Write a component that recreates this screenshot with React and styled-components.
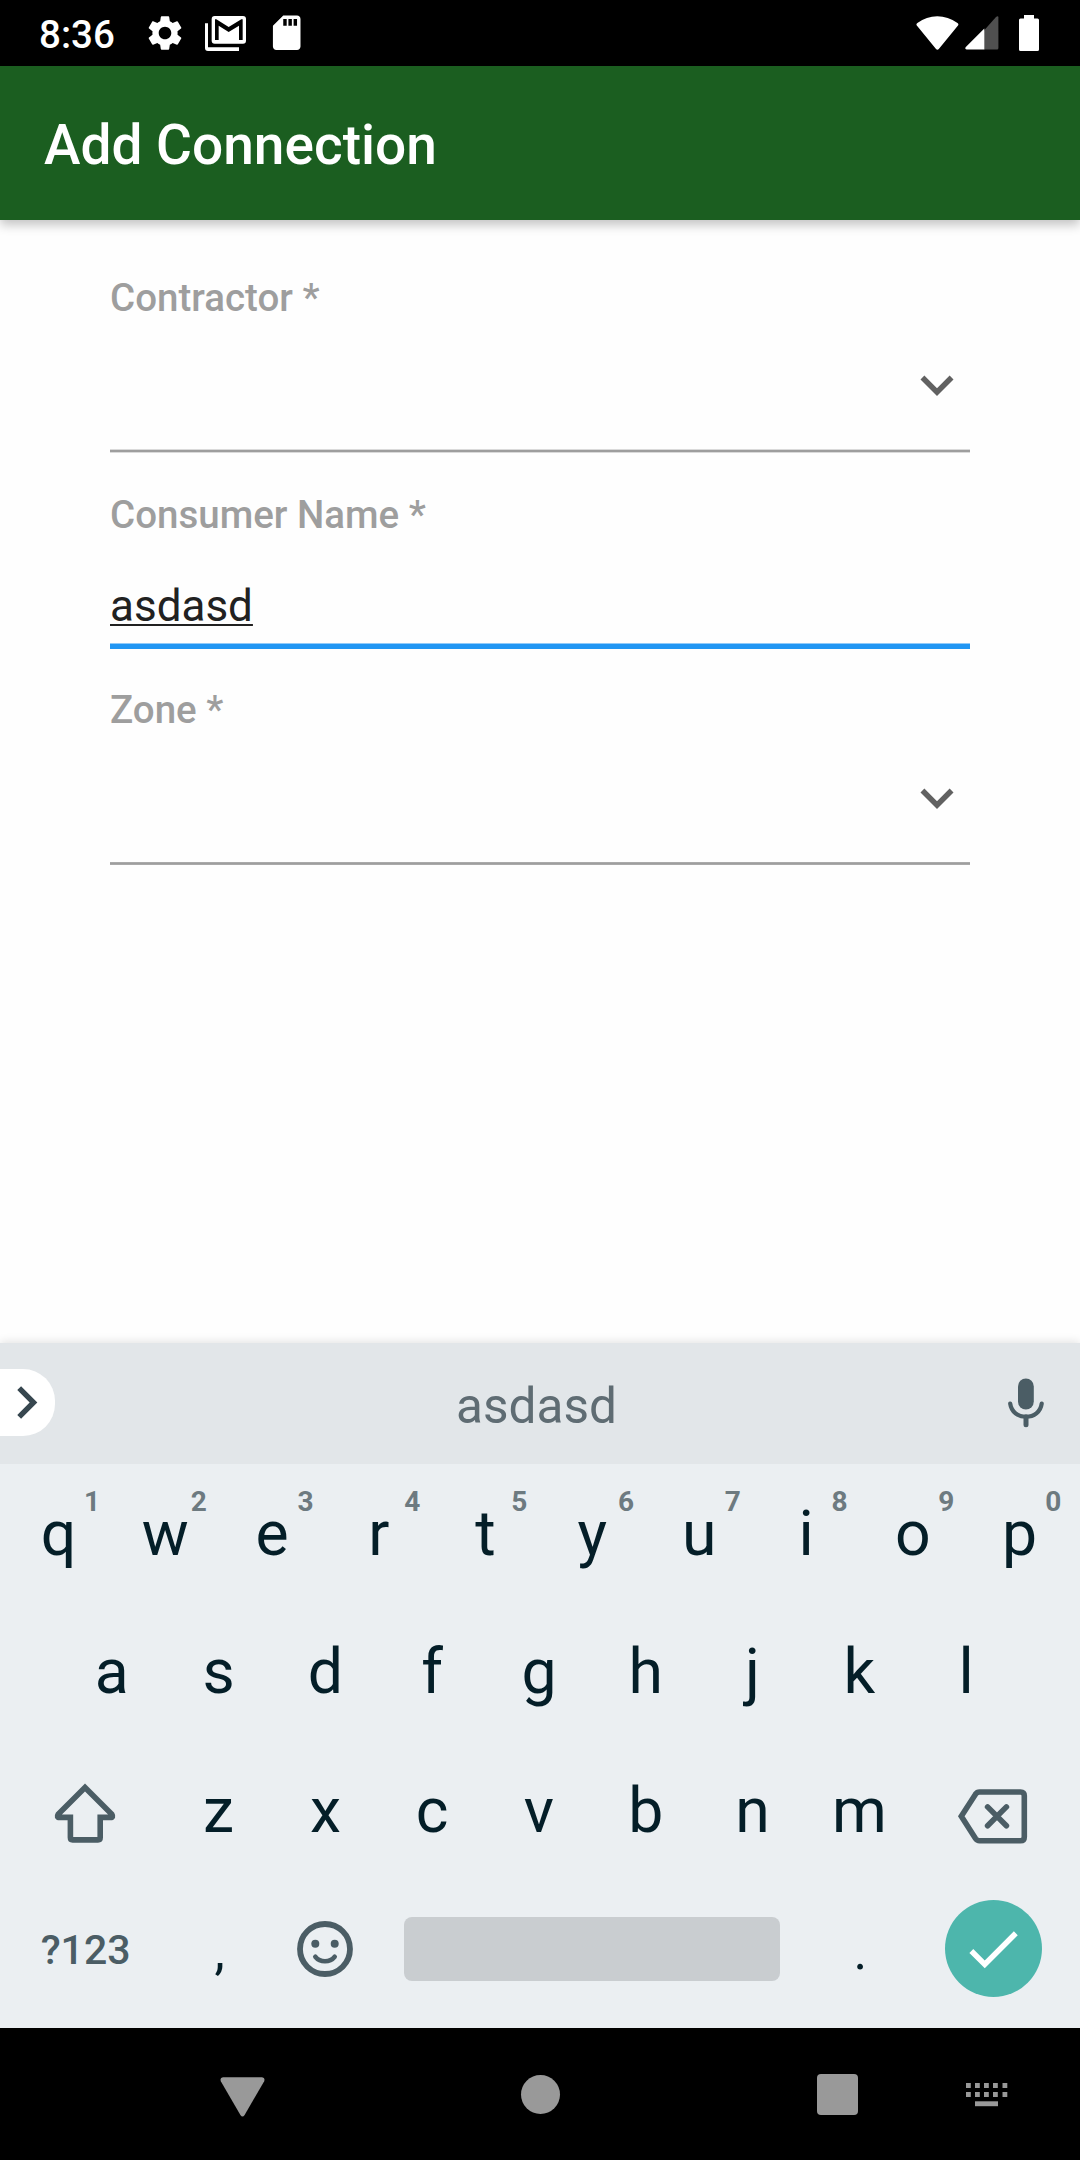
import React from "react";
import styled, { createGlobalStyle } from "styled-components";
import { MdSettings, MdSdStorage, MdKeyboardArrowDown, MdKeyboardArrowRight, MdCheck } from "react-icons/md";

const GlobalStyle = createGlobalStyle`
  * { box-sizing: border-box; }
  body { margin: 0; background: #fefefe; }
`;

const Screen = styled.div`
  width: 1080px;
  height: 2160px;
  display: flex;
  flex-direction: column;
  overflow: hidden;
  background: #fefefe;
  font-family: Roboto, "Noto Sans", sans-serif;
  svg { display: block; flex: none; }
`;

const StatusBar = styled.header`
  flex: none;
  height: 66px;
  display: flex;
  align-items: center;
  justify-content: space-between;
  padding: 0 41px 0 39px;
  background: #000;
  color: #fff;
`;

const StatusGroup = styled.div`
  display: flex;
  align-items: center;
`;

const Clock = styled.span`
  width: 95px;
  padding-top: 3px;
  font-size: 38.5px;
  line-height: 46px;
  font-weight: 500;
`;

const Notification = styled.span`
  width: 61px;
  display: flex;
  justify-content: center;
`;

const SignalGroup = styled(StatusGroup)`
  gap: ${(p) => p.$gap}px;
`;

const AppBar = styled.div`
  flex: none;
  height: 154px;
  display: flex;
  align-items: center;
  padding: 4px 44px 0;
  background: #1b5e20;
  box-shadow: 0 5px 10px rgba(0, 0, 0, 0.23);
  z-index: 1;
`;

const Title = styled.h1`
  margin: 0;
  color: #fff;
  font-size: 55px;
  line-height: 64px;
  font-weight: 500;
`;

const Form = styled.form`
  flex: 1;
  display: flex;
  flex-direction: column;
  padding: 54px 110px 0;
`;

const Field = styled.div`
  display: flex;
  flex-direction: column;
  margin-bottom: ${(p) => p.$gap || 0}px;
`;

const Label = styled.label`
  height: 46px;
  color: #9e9e9e;
  font-size: 38.5px;
  line-height: 48px;
  font-weight: 500;
`;

const SelectArea = styled.div`
  height: ${(p) => p.$height}px;
  padding-top: 1px;
  display: flex;
  align-items: center;
  justify-content: flex-end;
  color: #616161;
`;

const InputArea = styled.div`
  height: 106px;
  padding-top: 32px;
  color: #212121;
  font-size: 44px;
  line-height: 74px;
  span {
    text-decoration: underline;
    text-decoration-thickness: 2px;
    text-underline-offset: 3px;
    text-decoration-skip-ink: none;
  }
`;

const Rule = styled.div`
  height: ${(p) => p.$height}px;
  background: ${(p) => p.$edge};
  padding: ${(p) => p.$inset};
  &::before {
    content: "";
    display: block;
    height: 100%;
    background: ${(p) => p.$color};
  }
`;

const Keyboard = styled.section`
  flex: none;
  height: 685px;
  display: flex;
  flex-direction: column;
  background: #ebeff2;
  box-shadow: 0 -1px 9px rgba(0, 0, 0, 0.12);
`;

const Strip = styled.div`
  height: 121px;
  display: grid;
  grid-template-columns: 55px 1fr 56px;
  align-items: center;
  padding-right: 26px;
  background: #e2e6e9;
`;

const Expand = styled.button`
  width: 55px;
  height: 67px;
  margin: 0 0 2px;
  padding: 0;
  display: flex;
  align-items: center;
  border: 0;
  border-radius: 0 32px 32px 0;
  background: #fff;
  color: #37474f;
  overflow: hidden;
  svg { margin-left: -6px; }
`;

const Suggestion = styled.span`
  padding: 4px 0 0 20px;
  text-align: center;
  color: #5f6c73;
  font-size: 49.5px;
  line-height: 60px;
`;

const MicSlot = styled.span`
  display: flex;
  justify-content: center;
  padding-bottom: 2px;
`;

const Keys = styled.div`
  display: flex;
  flex-direction: column;
`;

const KeyRow = styled.div`
  height: 138.5px;
  display: flex;
  padding: 0 0 0 ${(p) => p.$inset || 5}px;
`;

const Key = styled.div`
  position: relative;
  flex: none;
  width: ${(p) => 106.8 * (p.$units || 1)}px;
  display: flex;
  align-items: center;
  justify-content: center;
  padding-top: 1px;
  color: #041e28;
  font-size: 62.5px;
  line-height: 74px;
`;

const PunctuationKey = styled(Key)`
  padding: 6px 0 0 2px;
  font-size: 52px;
  line-height: 62px;
`;

const Hint = styled.sup`
  position: absolute;
  left: 72px;
  top: 22px;
  width: 30px;
  text-align: center;
  color: #6d7a80;
  font-size: 28px;
  line-height: 32px;
  font-weight: 700;
`;

const IconKey = styled(Key)`
  color: #4b5d65;
  padding-top: ${(p) => p.$drop || 0}px;
`;

const ModeKey = styled(IconKey)`
  padding-left: 1px;
  font-size: 41px;
  line-height: 50px;
  font-weight: 500;
`;

const SpaceBar = styled.div`
  width: 376px;
  height: 64px;
  border-radius: 8px;
  background: #c9cdd0;
`;

const Done = styled.div`
  width: 97px;
  height: 97px;
  margin-left: 1px;
  display: flex;
  align-items: center;
  justify-content: center;
  border-radius: 50%;
  background: #4db6ac;
  color: #fff;
`;

const NavBar = styled.nav`
  flex: none;
  height: 132px;
  display: grid;
  grid-template-columns: 195px 400px 195px 103px;
  align-items: center;
  justify-items: center;
  padding: 1px 0 0 145px;
  background: #000;
  color: #999;
`;

const HomeDot = styled.span`
  width: 39px;
  height: 39px;
  border-radius: 50%;
  background: currentColor;
`;

const RecentsSquare = styled.span`
  width: 41px;
  height: 41px;
  border-radius: 4px;
  background: currentColor;
`;

const MailStackIcon = () => (
  <svg width="41" height="35" viewBox="0 0 123 105">
    <path fill="#fff" d="M0 22H9V94H102V105H9Q0 105 0 96Z" />
    <rect x="20" y="0" width="103" height="83" rx="9" fill="#fff" />
    <path d="M30 10H34L71 33L109 10H113V72H102V29L71 48L41 29V72H30Z" />
  </svg>
);

const WifiIcon = () => (
  <svg width="43" height="34" viewBox="0 0 43 34" fill="#fff">
    <path d="M20 33L.8 9.6Q-.2 8 1.4 7Q10.5.2 21.3.2Q32 .2 41.5 7Q43 8 42 9.6L22.8 33Q21.4 34.3 20 33Z" />
  </svg>
);

const SignalIcon = () => (
  <svg width="34" height="34" viewBox="0 0 34 34">
    <path fill="#505050" d="M19 14.5L31 1Q33.4-.6 33.4 1.6V32Q33.4 33.5 32 33.5H19Z" />
    <path fill="#fff" d="M19.3 12.6V33.5H1.6Q-.6 33 .8 31Z" />
  </svg>
);

const BatteryIcon = () => (
  <svg width="20" height="36" viewBox="0 0 20 36" fill="#fff">
    <path d="M5 0H15V3.5H18.5Q20 3.5 20 5V34.5Q20 36 18.5 36H1.5Q0 36 0 34.5V5Q0 3.5 1.5 3.5H5Z" />
  </svg>
);

const MicIcon = () => (
  <svg width="36" height="50" viewBox="0 0 36 50" fill="none" stroke="#4b5d65">
    <rect x="10" y=".5" width="15.8" height="31" rx="7.9" fill="#4b5d65" stroke="none" />
    <path d="M2.2 25.6C3.4 34 10 38.7 18 38.7S32.5 34 33.7 25.6" strokeWidth="4.2" strokeLinecap="round" />
    <path d="M18 39V46.8" strokeWidth="5" strokeLinecap="round" />
  </svg>
);

const ShiftIcon = () => (
  <svg width="64" height="64" viewBox="0 0 64 64" fill="none" stroke="currentColor" strokeWidth="5.6">
    <path d="M32 6.4L5.2 33.2Q3.2 36.4 6.5 36.4H17.4V56.5Q17.4 58.9 19.6 58.9H45Q47.2 58.9 47.2 56.5V36.4H57.5Q60.8 36.4 58.8 33.2Z" />
  </svg>
);

const BackspaceIcon = () => (
  <svg width="76" height="60" viewBox="0 0 76 60" fill="none" stroke="currentColor" strokeWidth="5.6">
    <path d="M6.3 29.3L20.5 7.2Q22 5 24.5 5H65.5Q69.3 5 69.3 8.8V49.9Q69.3 53.7 65.5 53.7H24.5Q22 53.7 20.5 51.5Z" />
    <path d="M32.6 19.9L51.4 38.8M51.4 19.9L32.6 38.8" strokeLinecap="round" />
  </svg>
);

const SmileIcon = () => (
  <svg width="56" height="56" viewBox="0 0 56 56" fill="none" stroke="currentColor">
    <circle cx="28" cy="28" r="25" strokeWidth="5.8" />
    <circle cx="18.3" cy="22.7" r="4" fill="currentColor" stroke="none" />
    <circle cx="37.7" cy="22.7" r="4" fill="currentColor" stroke="none" />
    <path d="M18.3 35.7Q22 40.3 28 40.3T37.7 35.7" strokeWidth="4.6" strokeLinecap="round" />
  </svg>
);

const BackIcon = () => (
  <svg width="45" height="44" viewBox="0 -4 45 44" fill="currentColor">
    <path d="M3 .2H42Q45.4 .8 44.2 4.2L24.6 38Q22.5 41 20.4 38L.8 4.2Q-.4 .8 3 .2Z" />
  </svg>
);

const KeyboardIcon = () => (
  <svg width="42" height="24" viewBox="0 0 42 24" fill="currentColor">
    {[0, 9].map((y) =>
      [0, 9, 18, 27, 36.5].map((x) => <rect key={`${x}-${y}`} x={x} y={y} width="4.8" height="5" />)
    )}
    <rect x="9" y="18.3" width="23" height="4.9" />
  </svg>
);

const SelectField = ({ label, height, gap, children }) => (
  <Field $gap={gap}>
    <Label>{label}</Label>
    <SelectArea $height={height}>
      <MdKeyboardArrowDown size={66} />
    </SelectArea>
    {children}
  </Field>
);

const Letters = ({ text, hints = "" }) =>
  [...text].map((letter, i) => (
    <Key key={letter}>
      {letter}
      {hints[i] && <Hint>{hints[i]}</Hint>}
    </Key>
  ));

export default function App() {
  return (
    <Screen>
      <GlobalStyle />
      <StatusBar>
        <StatusGroup>
          <Clock>8:36</Clock>
          <Notification><MdSettings size={42} /></Notification>
          <Notification><MailStackIcon /></Notification>
          <Notification><MdSdStorage size={41.4} /></Notification>
        </StatusGroup>
        <SignalGroup $gap={20}>
          <SignalGroup $gap={6}>
            <WifiIcon />
            <SignalIcon />
          </SignalGroup>
          <BatteryIcon />
        </SignalGroup>
      </StatusBar>
      <AppBar>
        <Title>Add Connection</Title>
      </AppBar>
      <Form>
        <SelectField label="Contractor *" height={129} gap={38}>
          <Rule $height={4} $inset="1px 0" $edge="#dadada" $color="#9e9e9e" />
        </SelectField>
        <Field $gap={37}>
          <Label>Consumer Name *</Label>
          <InputArea><span>asdasd</span></InputArea>
          <Rule $height={6} $inset="1px 0 0" $edge="#90caf9" $color="#2196f3" />
        </Field>
        <SelectField label="Zone *" height={130}>
          <Rule $height={3} $inset="1px 0" $edge="#aaaaaa" $color="#9e9e9e" />
        </SelectField>
      </Form>
      <Keyboard>
        <Strip>
          <Expand type="button"><MdKeyboardArrowRight size={65} /></Expand>
          <Suggestion>asdasd</Suggestion>
          <MicSlot><MicIcon /></MicSlot>
        </Strip>
        <Keys>
          <KeyRow><Letters text="qwertyuiop" hints="1234567890" /></KeyRow>
          <KeyRow $inset={58.4}><Letters text="asdfghjkl" /></KeyRow>
          <KeyRow>
            <IconKey $units={1.5} $drop={5}><ShiftIcon /></IconKey>
            <Letters text="zxcvbnm" />
            <IconKey $units={1.5} $drop={13}><BackspaceIcon /></IconKey>
          </KeyRow>
          <KeyRow>
            <ModeKey $units={1.5} $drop={2}>?123</ModeKey>
            <PunctuationKey>,</PunctuationKey>
            <IconKey><SmileIcon /></IconKey>
            <IconKey $units={4}><SpaceBar /></IconKey>
            <PunctuationKey>.</PunctuationKey>
            <IconKey $units={1.5}><Done><MdCheck size={66} /></Done></IconKey>
          </KeyRow>
        </Keys>
      </Keyboard>
      <NavBar>
        <BackIcon />
        <HomeDot />
        <RecentsSquare />
        <KeyboardIcon />
      </NavBar>
    </Screen>
  );
}
